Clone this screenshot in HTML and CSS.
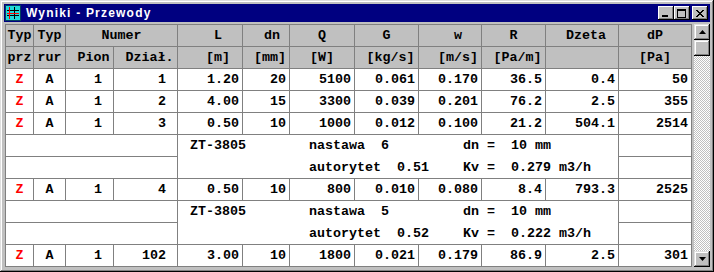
FILE: index.html
```html
<!DOCTYPE html>
<html>
<head>
    <title>Wyniki - Przewody</title>
    <link rel="stylesheet" href="styles.css">
</head>
<body>
    <div class="window">
        <!-- title bar with icon and window buttons -->
        <div class="title-bar">
            <svg class="app-icon" width="16" height="16" viewBox="0 0 16 16">
                <rect x="0.5" y="0.5" width="15" height="15" fill="#20d8d8" stroke="#004060"/>
                <path d="M2 5.5H14M2 10.5H14M9.5 2V14" stroke="#000"/>
                <path d="M4.5 2V14M2 8.5H14" stroke="#f00"/>
            </svg>
            <span class="title-text">Wyniki - Przewody</span>
            <div class="title-buttons">
                <div class="tb-btn"><span class="ico-min"></span></div>
                <div class="tb-btn"><span class="ico-max"></span></div>
                <div class="tb-btn close">
                    <svg width="8" height="7" viewBox="0 0 8 7"><path d="M0 0L7 7M1 0L8 7M7 0L0 7M8 0L1 7" stroke="#000" stroke-width="1"/></svg>
                </div>
            </div>
        </div>

        <div class="client">
            <table class="results">
                <colgroup>
                    <col style="width:28px"><col style="width:32px"><col style="width:48px"><col style="width:64px">
                    <col style="width:65px"><col style="width:47px"><col style="width:65px"><col style="width:64px">
                    <col style="width:63px"><col style="width:64px"><col style="width:73px"><col style="width:73px">
                </colgroup>
                <thead>
                    <tr>
                        <th>Typ</th><th>Typ</th><th colspan="2">Numer</th>
                        <th class="s16">L</th><th class="s12">dn</th><th>Q</th><th>G</th>
                        <th class="s16">w</th><th>R</th><th class="s8">Dzeta</th><th>dP</th>
                    </tr>
                    <tr>
                        <th>prz</th><th>rur</th><th class="s8">Pion</th><th class="s8">Dział.</th>
                        <th class="s16">[m]</th><th class="s8">[mm]</th><th>[W]</th><th class="s8">[kg/s]</th>
                        <th class="s16">[m/s]</th><th class="s8">[Pa/m]</th><th></th><th>[Pa]</th>
                    </tr>
                </thead>
                <tbody>
                    <tr>
                        <td class="typ">Z</td><td class="c">A</td><td class="wide">1</td><td class="wide">1</td>
                        <td>1.20</td><td>20</td><td>5100</td><td>0.061</td><td>0.170</td><td>36.5</td><td>0.4</td><td>50</td>
                    </tr>
                    <tr>
                        <td class="typ">Z</td><td class="c">A</td><td class="wide">1</td><td class="wide">2</td>
                        <td>4.00</td><td>15</td><td>3300</td><td>0.039</td><td>0.201</td><td>76.2</td><td>2.5</td><td>355</td>
                    </tr>
                    <tr>
                        <td class="typ">Z</td><td class="c">A</td><td class="wide">1</td><td class="wide">3</td>
                        <td>0.50</td><td>10</td><td>1000</td><td>0.012</td><td>0.100</td><td>21.2</td><td>504.1</td><td>2514</td>
                    </tr>
                    <!-- valve under the 3rd section -->
                    <tr>
                        <td colspan="4"></td>
                        <td colspan="7" rowspan="2" class="valve">
                            <div class="valve-grid">
                                <span>ZT-3805</span><span>nastawa  6</span><span>dn =  10 mm</span>
                                <span></span><span>autorytet  0.51</span><span>Kv =  0.279 m3/h</span>
                            </div>
                        </td>
                        <td></td>
                    </tr>
                    <tr><td colspan="4"></td><td></td></tr>
                    <tr>
                        <td class="typ">Z</td><td class="c">A</td><td class="wide">1</td><td class="wide">4</td>
                        <td>0.50</td><td>10</td><td>800</td><td>0.010</td><td>0.080</td><td>8.4</td><td>793.3</td><td>2525</td>
                    </tr>
                    <tr>
                        <td colspan="4"></td>
                        <td colspan="7" rowspan="2" class="valve">
                            <div class="valve-grid">
                                <span>ZT-3805</span><span>nastawa  5</span><span>dn =  10 mm</span>
                                <span></span><span>autorytet  0.52</span><span>Kv =  0.222 m3/h</span>
                            </div>
                        </td>
                        <td></td>
                    </tr>
                    <tr><td colspan="4"></td><td></td></tr>
                    <tr>
                        <td class="typ">Z</td><td class="c">A</td><td class="wide">1</td><td class="wide">102</td>
                        <td>3.00</td><td>10</td><td>1800</td><td>0.021</td><td>0.179</td><td>86.9</td><td>2.5</td><td>301</td>
                    </tr>
                </tbody>
            </table>

            <!-- vertical scrollbar -->
            <div class="scrollbar">
                <div class="sb-btn">
                    <svg width="7" height="4" viewBox="0 0 7 4"><path d="M3.5 0L7 4H0Z" fill="#000"/></svg>
                </div>
                <div class="sb-thumb"></div>
                <div class="sb-track"></div>
                <div class="sb-btn">
                    <svg width="7" height="4" viewBox="0 0 7 4"><path d="M0 0H7L3.5 4Z" fill="#000"/></svg>
                </div>
            </div>
        </div>
    </div>
</body>
</html>
```

FILE: styles.css
```css
body {
    margin: 0;
    background: #c0c0c0;
}

/* window frame, win95 style */
.window {
    width: 714px;
    height: 272px;
    box-sizing: border-box;
    padding: 4px;
    background: #c0c0c0;
    box-shadow: inset -1px -1px #000, inset 1px 1px #dfdfdf, inset -2px -2px #808080, inset 2px 2px #fff;
    display: flex;
    flex-direction: column;
    overflow: hidden;
}

.title-bar {
    height: 18px;
    background: #000080;
    display: flex;
    align-items: center;
    padding-left: 1px;
    flex-shrink: 0;
}

.app-icon {
    margin-right: 5px;
}

.title-text {
    color: #fff;
    font-family: "Liberation Sans", Arial, sans-serif;
    font-weight: bold;
    font-size: 12px;
    letter-spacing: 1.2px;
    flex: 1;
}

.title-buttons {
    display: flex;
    padding-right: 2px;
}

.tb-btn {
    width: 16px;
    height: 14px;
    box-sizing: border-box;
    background: #c0c0c0;
    box-shadow: inset -1px -1px #000, inset 1px 1px #fff, inset -2px -2px #808080;
    display: flex;
    align-items: center;
    justify-content: center;
}

.tb-btn.close {
    margin-left: 2px;
}

.ico-min {
    width: 6px;
    height: 2px;
    background: #000;
    margin-top: 6px;
    margin-right: 2px;
}

.ico-max {
    width: 9px;
    height: 9px;
    box-sizing: border-box;
    border: 1px solid #000;
    border-top-width: 2px;
    margin-right: 1px;
}

/* area below the title: table and scrollbar */
.client {
    margin-top: 2px;
    flex: 1;
    display: flex;
    padding-left: 1px;
    min-height: 0;
}

.results {
    table-layout: fixed;
    width: 686px;
    border-collapse: collapse;
    font-family: "Liberation Mono", "Courier New", monospace;
    font-weight: bold;
    font-size: 13.33px;
    align-self: flex-start;
}

.results th, .results td {
    border: 1px solid #808080;
    height: 21px;
    padding: 0 3px 0 0;
    white-space: nowrap;
    line-height: 14px;
}

.results th {
    background: #c0c0c0;
    text-align: center;
    padding: 0;
}

.results td {
    background: #fff;
    text-align: right;
}

/* shifting some header captions right, as in the original */
.results th.s8 { padding-left: 8px; }
.results th.s12 { padding-left: 12px; }
.results th.s16 { padding-left: 16px; }

.results td.typ {
    color: #f00;
    text-align: center;
    padding: 0;
}

.results td.c {
    text-align: center;
    padding: 0;
}

.results td.wide {
    padding-right: 11px;
}

.results td.valve {
    text-align: left;
    padding: 0 0 0 12px;
}

.valve-grid {
    display: grid;
    grid-template-columns: 119px 154px auto;
    grid-template-rows: 22px 21px;
    align-items: center;
}

.valve-grid span {
    white-space: pre;
}

/* scrollbar */
.scrollbar {
    width: 16px;
    margin-left: auto;
    margin-bottom: 1px;
    display: flex;
    flex-direction: column;
    background-color: #c0c0c0;
    background-image: conic-gradient(#fff 25%, #c0c0c0 0 50%, #fff 0 75%, #c0c0c0 0);
    background-size: 2px 2px;
}

.sb-btn, .sb-thumb {
    height: 16px;
    box-sizing: border-box;
    background: #c0c0c0;
    box-shadow: inset -1px -1px #000, inset 1px 1px #dfdfdf, inset -2px -2px #808080, inset 2px 2px #fff;
    display: flex;
    align-items: center;
    justify-content: center;
}

.sb-track {
    flex: 1;
}
```
